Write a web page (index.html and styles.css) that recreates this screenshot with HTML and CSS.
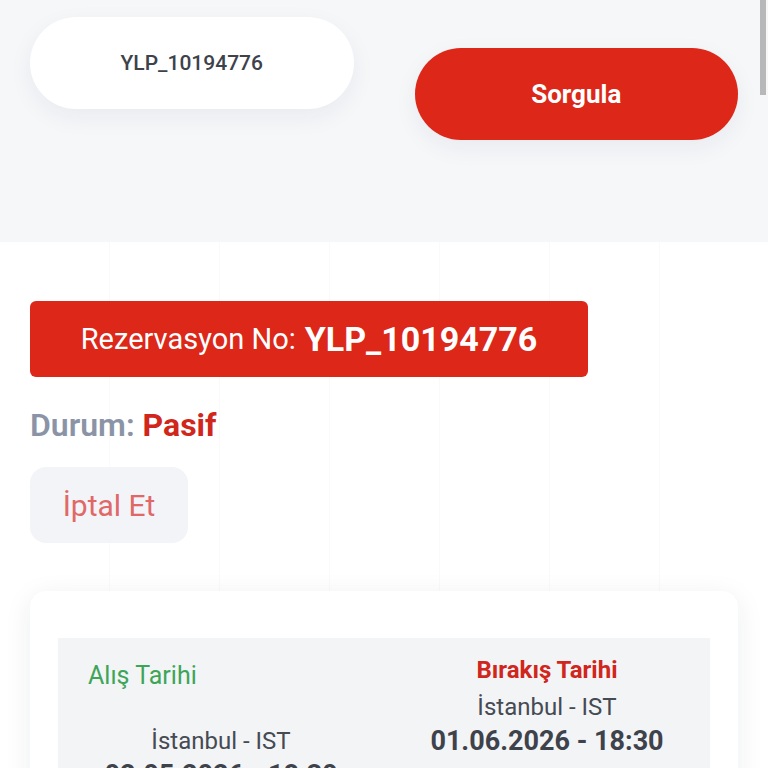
FILE: index.html
```html
<!DOCTYPE html>
<html lang="tr">
<head>
  <meta charset="UTF-8" />
  <meta name="viewport" content="width=device-width, initial-scale=1.0" />
  <title>Rezervasyon Sorgula</title>
  <link rel="stylesheet" href="styles.css">
</head>
<body>
  <div class="search">
    <input class="search-input" type="text" value="YLP_10194776" />
    <button class="search-btn" type="button">Sorgula</button>
  </div>

  <div class="result">
    <div class="res-banner">Rezervasyon No: <b>YLP_10194776</b></div>
    <p class="status">Durum: <span class="passive">Pasif</span></p>
    <button class="cancel-btn" type="button">İptal Et</button>

    <div class="card">
      <div class="dates">
        <div class="col col-pick">
          <div class="col-title">Alış Tarihi</div>
          <div class="loc">İstanbul - IST</div>
          <div class="date">02.05.2026 - 18:30</div>
        </div>
        <div class="col col-drop">
          <div class="col-title">Bırakış Tarihi</div>
          <div class="loc">İstanbul - IST</div>
          <div class="date">01.06.2026 - 18:30</div>
        </div>
      </div>
    </div>
  </div>

  <div class="scroll-thumb"></div>
</body>
</html>
```

FILE: styles.css
```css
:root{--red:#dc2719;--text:#3d424b;--muted:#8a94a6;--soft:#f3f4f6;--radius:16px}
*{box-sizing:border-box;font-family:Roboto,"Liberation Sans",Arial,sans-serif}
body{margin:0;background:#fff;color:var(--text);overflow:hidden}

.search{height:242px;background:#f6f7f9;padding:17px 30px 0;display:grid;grid-template-columns:1fr 1fr;column-gap:61px;align-items:start}
.search-input{height:92px;width:100%;border:none;border-radius:46px;background:#fff;text-align:center;font-size:21px;font-weight:500;color:var(--text);box-shadow:0 8px 24px rgba(30,40,60,.06);outline:none}
.search-btn{height:92px;margin-top:31px;border:none;border-radius:46px;background:var(--red);color:#fff;font-size:26px;font-weight:700;box-shadow:0 8px 24px rgba(30,40,60,.06)}

.result{padding:59px 30px 0;background:#fff repeating-linear-gradient(90deg,transparent 0 109px,#fafafb 109px 110px)}
.res-banner{width:558px;height:76px;border-radius:6px;background:var(--red);color:#fff;display:flex;align-items:center;justify-content:center;font-size:29px;gap:9px}
.res-banner b{font-size:34px;font-weight:700}
.status{margin:28px 0 0;font-size:32px;font-weight:600;color:var(--muted);line-height:40px}
.passive{color:#d1261b;font-weight:700}
.cancel-btn{margin-top:22px;width:158px;height:76px;border:none;border-radius:16px;background:#f3f4f7;color:#e06868;font-size:30px}

.card{margin-top:48px;background:#fff;border-radius:var(--radius);padding:47px 28px 0;box-shadow:0 6px 28px rgba(30,40,60,.08)}
.dates{background:var(--soft);display:grid;grid-template-columns:1fr 1fr;padding:14px 0 20px;min-height:160px}
.col{text-align:center}
.col-title{font-size:25px;line-height:36px}
.col-pick .col-title{color:#3da558;text-align:left;padding-left:30px;margin-top:6px}
.col-drop .col-title{color:#d1261b;font-weight:700;font-size:24px}
.loc{font-size:24px;line-height:35px;color:#454a53;margin-top:2px}
.col-pick .loc{margin-top:30px}
.date{font-size:27px;line-height:32px;font-weight:700;color:var(--text)}

.scroll-thumb{position:fixed;top:0;right:2px;width:6px;height:95px;background:#b8b8b8}
```
